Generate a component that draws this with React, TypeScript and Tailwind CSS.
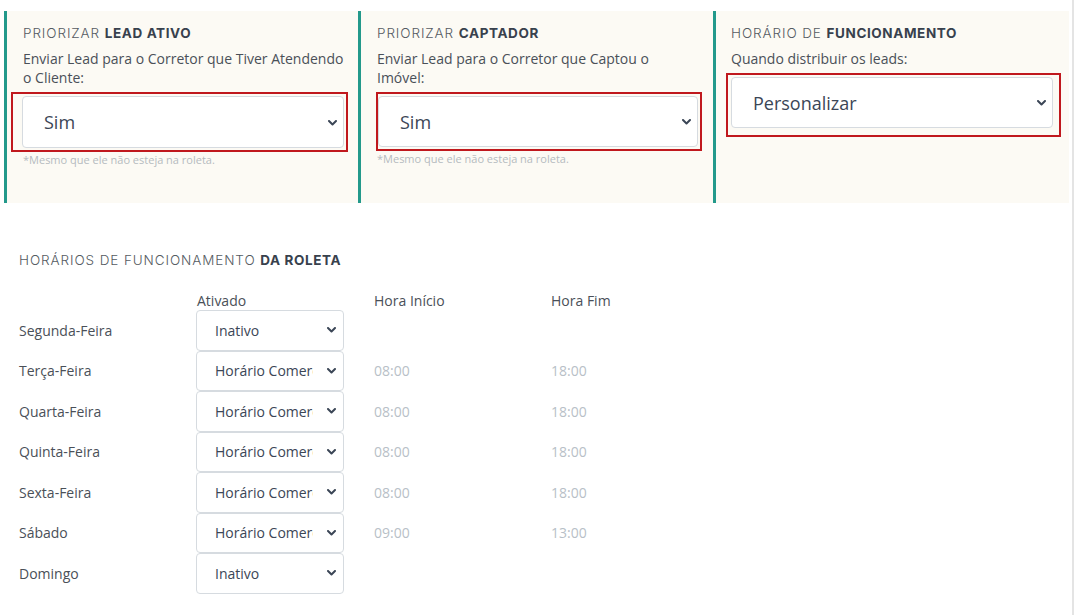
import React from 'react';

const Chevron = () => (
  <svg width="9" height="6" viewBox="0 0 9 6" className="shrink-0">
    <path d="M1 1l3.5 3.5L8 1" fill="none" stroke="#3b4656" strokeWidth="2" strokeLinecap="round" strokeLinejoin="round" />
  </svg>
);

interface BigSelectProps {
  value: string;
  h: string;
}

const BigSelect = ({ value, h }: BigSelectProps) => (
  <div className={`${h} w-full flex items-center justify-between pl-[21px] pr-[6px] pt-[1px] bg-white border border-[#d6dbe0] rounded-[4px] text-[18px] text-[#3b4656]`}>
    <span>{value}</span>
    <Chevron />
  </div>
);

const SmallSelect = ({ value }: { value: string }) => (
  <div className="h-[40.5px] w-[148px] flex items-center justify-between pl-[18px] pr-[7px] bg-white border border-[#d6dbe0] rounded-[4px] text-[14px] text-[#3b4656]">
    <span className="w-[98px] overflow-hidden whitespace-nowrap">{value}</span>
    <Chevron />
  </div>
);

const Heading = ({ light, bold }: { light: string; bold: string }) => (
  <div className="font-['Inter',sans-serif] text-[13.5px] leading-[18px] uppercase text-[#555b62] tracking-[0.9px]">
    <span className="font-light">{light}</span> <span className="font-bold text-[#38414d] tracking-[0.6px]">{bold}</span>
  </div>
);

const Note = () => (
  <div className="mt-[1px] text-[11px] leading-[13px] text-[#b5babf]">*Mesmo que ele não esteja na roleta.</div>
);

const days = [
  { day: 'Segunda-Feira', status: 'Inativo', start: '', end: '' },
  { day: 'Terça-Feira', status: 'Horário Comercial', start: '08:00', end: '18:00' },
  { day: 'Quarta-Feira', status: 'Horário Comercial', start: '08:00', end: '18:00' },
  { day: 'Quinta-Feira', status: 'Horário Comercial', start: '08:00', end: '18:00' },
  { day: 'Sexta-Feira', status: 'Horário Comercial', start: '08:00', end: '18:00' },
  { day: 'Sábado', status: 'Horário Comercial', start: '09:00', end: '13:00' },
  { day: 'Domingo', status: 'Inativo', start: '', end: '' },
];

const App = () => {
  return (
    <div className="w-[1076px] h-[615px] flex bg-white font-['Open_Sans',sans-serif] text-[#4a5058] overflow-hidden">
      <div className="w-[1072px] flex flex-col">
        <div className="flex ml-[4px] mt-[11px] h-[192px]">
          <div className="w-[354px] h-full bg-[#fcfaf4] border-l-[3px] border-[#23998b] pl-4 pt-[13px]">
            <Heading light="Priorizar" bold="Lead Ativo" />
            <div className="mt-[7px] text-[14px] leading-[19px] pr-2">Enviar Lead para o Corretor que Tiver Atendendo o Cliente:</div>
            <div className="mt-[5px] ml-[-12px] w-[337px] border-2 border-[#c0181d] pt-[2px] pl-[9px] pr-[2px] pb-[2px]">
              <BigSelect value="Sim" h="h-[52px]" />
            </div>
            <Note />
          </div>
          <div className="w-[355px] h-full bg-[#fcfaf4] border-l-[3px] border-[#23998b] pl-4 pt-[13px]">
            <Heading light="Priorizar" bold="Captador" />
            <div className="mt-[7px] text-[14px] leading-[19px] pr-6">Enviar Lead para o Corretor que Captou o Imóvel:</div>
            <div className="mt-[5px] ml-[-1px] w-[326px] border-2 border-[#c0181d] pt-[2px] pl-0 pr-[2px] pb-[2px]">
              <BigSelect value="Sim" h="h-[51px]" />
            </div>
            <Note />
          </div>
          <div className="w-[356px] h-full bg-[#fcfaf4] border-l-[3px] border-[#23998b] pl-[15px] pt-[13px]">
            <Heading light="Horário de" bold="Funcionamento" />
            <div className="mt-[7px] text-[14px] leading-[19px]">Quando distribuir os leads:</div>
            <div className="mt-[5px] ml-[-5px] w-[335px] border-2 border-[#c0181d] pt-[2px] pl-[3px] pr-[6px] pb-[7px]">
              <BigSelect value="Personalizar" h="h-[51px]" />
            </div>
          </div>
        </div>

        <div className="pl-[19px] mt-[48px]">
          <Heading light="Horários de funcionamento" bold="da roleta" />
          <div className="grid grid-cols-[177px_178px_177px_177px] mt-[22px] text-[14px]">
            <div className="h-[19px]" />
            <div className="h-[19px] leading-[19px] pl-[1px]">Ativado</div>
            <div className="h-[19px] leading-[19px]">Hora Início</div>
            <div className="h-[19px] leading-[19px]">Hora Fim</div>
            {days.map(d => (
              <React.Fragment key={d.day}>
                <div className="h-[40.5px] flex items-center">{d.day}</div>
                <div className="h-[40.5px]"><SmallSelect value={d.status} /></div>
                <div className="h-[40.5px] flex items-center text-[#b8bfc7]">{d.start}</div>
                <div className="h-[40.5px] flex items-center text-[#b8bfc7]">{d.end}</div>
              </React.Fragment>
            ))}
          </div>
        </div>
      </div>
      <div className="w-[2px] h-full bg-[#e4e4e4]" />
    </div>
  );
};

export default App;
